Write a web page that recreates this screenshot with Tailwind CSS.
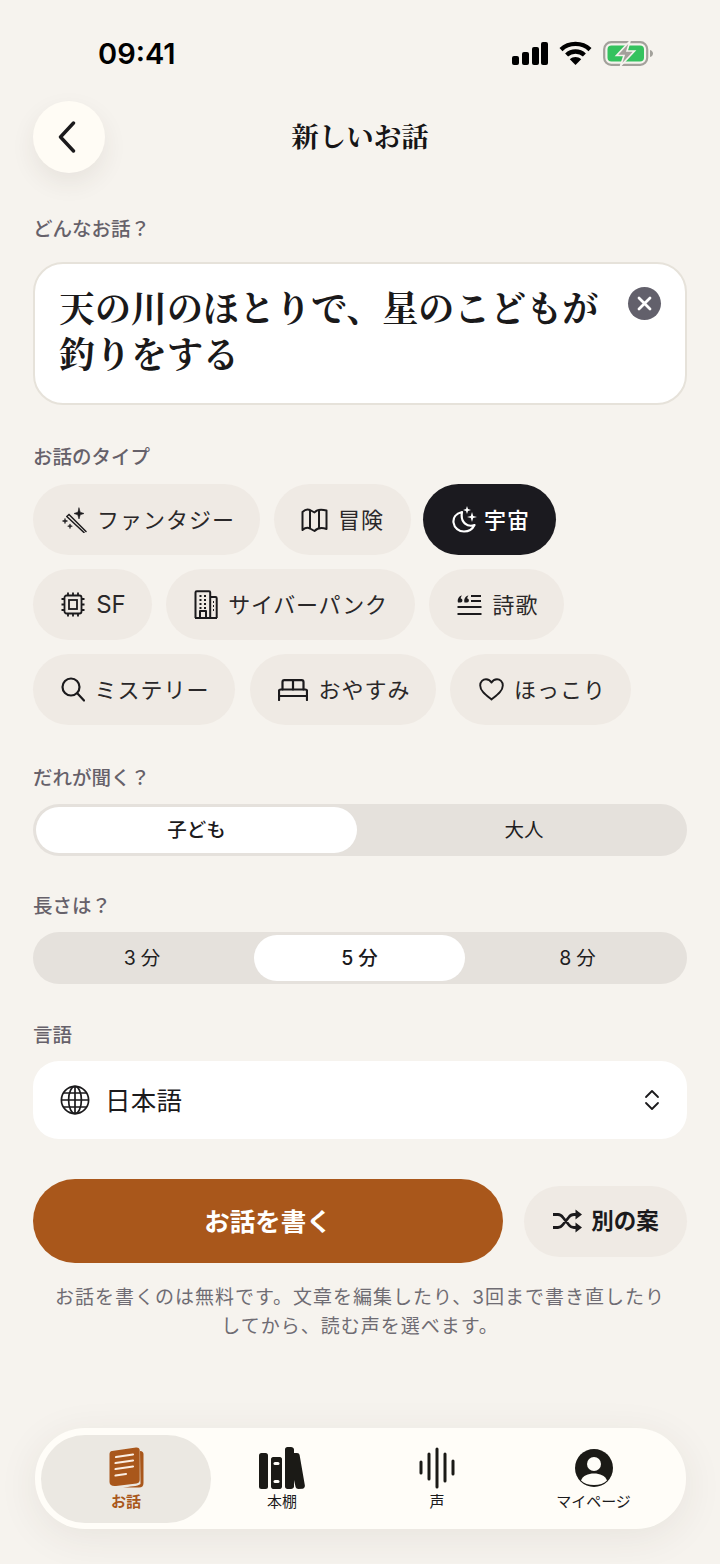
<!DOCTYPE html>
<html lang="ja">
<head>
    <meta charset="UTF-8">
    <meta name="viewport" content="width=device-width, initial-scale=1.0">
    <title>新しいお話</title>
    <script src="https://cdn.jsdelivr.net/npm/@tailwindcss/browser@4"></script>
</head>
<body class="bg-[#f6f3ee] font-['Inter','Noto_Sans_CJK_JP',sans-serif] text-[#1b1a1c]">
<div class="w-[720px] h-[1564px] overflow-hidden px-[33px] pt-[33px]">

    <!-- Status bar -->
    <div class="h-[40px] flex items-center justify-between pl-[65px] pr-[34px]">
        <span class="text-[29px] font-semibold text-black leading-none">09:41</span>
        <div class="flex items-center gap-[11px]">
            <svg width="36" height="23" viewBox="0 0 36 23" fill="#000">
                <rect x="0" y="14" width="7" height="9" rx="2"/><rect x="10" y="10" width="7" height="13" rx="2"/><rect x="20" y="5" width="7" height="18" rx="2"/><rect x="29" y="0" width="7" height="23" rx="2"/>
            </svg>
            <svg width="33" height="24" viewBox="0 0 33 24" fill="none" stroke="#000" stroke-width="4.4">
                <path d="M2 8.6 C10 1 23 1 31 8.6"/><path d="M7.6 14 C12.6 9.4 20.4 9.4 25.4 14"/><path d="M16.5 24 L10.8 18.2 C14 15.4 19 15.4 22.2 18.2 Z" fill="#000" stroke="none"/>
            </svg>
            <svg width="50" height="25" viewBox="0 0 50 25" fill="none">
                <rect x="1.2" y="1.2" width="43" height="22.6" rx="7" stroke="#a3a19b" stroke-width="2.2"/>
                <rect x="4.5" y="4.5" width="36.5" height="16" rx="4" fill="#35c25e"/>
                <path d="M47 9 C49 9.5 50 11 50 12.5 C50 14 49 15.5 47 16 Z" fill="#a3a19b"/>
                <path d="M27 0 L13.5 14.5 H21 L17.5 25 L31.5 10 H24 Z" fill="#a3a19b" stroke="#f6f3ee" stroke-width="1.6"/>
            </svg>
        </div>
    </div>

    <!-- Nav -->
    <div class="relative mt-[28px] h-[72px] flex items-center justify-center">
        <button class="absolute left-0 top-0 w-[72px] h-[72px] rounded-full bg-[#fffcf5] shadow-[0_10px_24px_rgba(60,50,40,0.08)] flex items-center justify-center pr-[5px]">
            <svg width="20" height="32" viewBox="0 0 20 32" fill="none" stroke="#1b1a1c" stroke-width="3.4" stroke-linecap="round" stroke-linejoin="round"><path d="M16.5 2 L3.5 16 L16.5 30"/></svg>
        </button>
        <h1 class="text-[27.5px] font-bold leading-none text-[#161516] pb-[2px] font-['Noto_Serif_CJK_JP','Noto_Sans_CJK_JP',serif]">新しいお話</h1>
    </div>

    <!-- Prompt -->
    <p class="mt-[42px] text-[19.5px] leading-[28px] font-medium text-[#66616a]">どんなお話？</p>
    <div class="relative mt-[19px] h-[143px] rounded-[30px] bg-white border-2 border-[#e6e2da] pl-[24px] pt-[20px]">
        <p class="text-[36px] leading-[46px] font-bold text-[#1a191a] w-[545px] font-['Noto_Serif_CJK_JP','Noto_Sans_CJK_JP',serif]">天の川のほとりで、星のこどもが釣りをする</p>
        <div class="absolute right-[24px] top-[23px] w-[33px] h-[33px] rounded-full bg-[#62606b] flex items-center justify-center">
            <svg width="15" height="15" viewBox="0 0 15 15" fill="none" stroke="#fff" stroke-width="2.8" stroke-linecap="round"><path d="M2 2 L13 13 M13 2 L2 13"/></svg>
        </div>
    </div>

    <!-- Type -->
    <p class="mt-[38px] text-[19.5px] leading-[28px] font-medium text-[#66616a]">お話のタイプ</p>
    <div class="mt-[13px] flex flex-col gap-[14px]">
        <div class="flex gap-[14px]">
            <div class="h-[71px] w-[227px] rounded-full bg-[#efeae4] flex items-center justify-center gap-[10px] pl-[4px] text-[#2a2829]">
                <svg width="25" height="26" viewBox="0 0 25 26" fill="none" stroke="#1b1a1c" stroke-width="1.5" stroke-linecap="round" stroke-linejoin="round">
                    <path d="M7 7.5 L24 24.5 M4.8 9.5 L22 25.5 M4.8 9.5 L7 7.5"/>
                    <path d="M17 1 L18.2 5.2 L22 6.5 L18.2 7.8 L17 12 L15.8 7.8 L12 6.5 L15.8 5.2 Z" fill="#1b1a1c" stroke-width="0.6"/>
                    <path d="M3 12 V16 M1 14 H5" stroke-width="1.3"/><path d="M8 17.5 V21 M6.2 19.2 H9.8" stroke-width="1.3"/>
                </svg>
                <span class="text-[22px] tracking-[1px] leading-none">ファンタジー</span>
            </div>
            <div class="h-[71px] w-[137px] rounded-full bg-[#efeae4] flex items-center justify-center gap-[10px] text-[#2a2829]">
                <svg width="27" height="26" viewBox="0 0 27 26" fill="none" stroke="#1b1a1c" stroke-width="2" stroke-linejoin="round">
                    <path d="M1.5 5 C4 2.5 7 2 9 3 L13.5 5.5 C15.5 3 20 2 25.5 3.5 V22 C21 20.5 16.5 21 13.5 24 L9 21.5 C7 20.5 4 20.8 1.5 23 Z"/><path d="M9 3 V21.5 M18 3 V21"/>
                </svg>
                <span class="text-[22px] tracking-[1px] leading-none">冒険</span>
            </div>
            <div class="-ml-[2px] h-[71px] w-[133px] rounded-full bg-[#1b1a1f] flex items-center justify-center gap-[7px] pl-[3px] text-white">
                <svg width="25" height="27" viewBox="0 0 25 27" fill="none" stroke="#fff" stroke-width="2.2" stroke-linejoin="round">
                    <path d="M10 6 C3.5 7.5 1 12 1.5 16.5 C2.2 22 7 25.5 12 25.5 C16.5 25.5 20.5 23.2 22.5 19 C16 21.5 8 17 10 6 Z"/>
                    <path d="M15 0 L16 3 L19 4 L16 5 L15 8 L14 5 L11 4 L14 3 Z" fill="#fff" stroke="none"/>
                    <path d="M20 6 L21.2 10 L25 11 L21.2 12 L20 16 L18.8 12 L15 11 L18.8 10 Z" fill="#fff" stroke="none"/>
                </svg>
                <span class="text-[22px] tracking-[1px] leading-none font-medium">宇宙</span>
            </div>
        </div>
        <div class="flex gap-[14px]">
            <div class="h-[71px] w-[119px] rounded-full bg-[#efeae4] flex items-center justify-center gap-[11px] pl-[2px] text-[#2a2829]">
                <svg width="24" height="25" viewBox="0 0 24 25" fill="none" stroke="#1b1a1c" stroke-width="1.8">
                    <rect x="3.5" y="3.5" width="17" height="18" rx="2"/><rect x="8" y="8" width="8" height="9"/>
                    <path d="M7 0.5 V3.5 M12 0.5 V3.5 M17 0.5 V3.5 M7 21.5 V24.5 M12 21.5 V24.5 M17 21.5 V24.5 M0.5 7 H3.5 M0.5 12.5 H3.5 M0.5 18 H3.5 M20.5 7 H23.5 M20.5 12.5 H23.5 M20.5 18 H23.5"/>
                </svg>
                <span class="text-[24px] leading-none text-[#2a2829]">SF</span>
            </div>
            <div class="h-[71px] w-[249px] rounded-full bg-[#efeae4] flex items-center justify-center gap-[10px] pl-[1px] text-[#2a2829]">
                <svg width="24" height="29" viewBox="0 0 24 29" fill="none" stroke="#1b1a1c" stroke-width="2" stroke-linejoin="round">
                    <path d="M1.5 28 V2.5 C1.5 1.8 2 1.2 2.8 1.2 H15 C15.7 1.2 16.2 1.8 16.2 2.5 V28"/><path d="M16.2 7 H21.5 C22.2 7 22.7 7.5 22.7 8.2 V28"/><path d="M1 28 H23"/><path d="M6 28 V21 H12 V28"/>
                    <path d="M5.5 6 H7.5 M10 6 H12 M5.5 10 H7.5 M10 10 H12 M5.5 14 H7.5 M10 14 H12 M5.5 18 H7.5 M10 18 H12 M19 12 H20 M19 16 H20 M19 20 H20" stroke-width="2.2"/>
                </svg>
                <span class="text-[22px] tracking-[0.7px] leading-none">サイバーパンク</span>
            </div>
            <div class="h-[71px] w-[135px] rounded-full bg-[#efeae4] flex items-center justify-center gap-[10px] pl-[3px] text-[#2a2829]">
                <svg width="25" height="22" viewBox="0 0 25 22" fill="none" stroke="#1b1a1c" stroke-width="2">
                    <path d="M14 2 H24 M14 7 H24 M0.5 13 H24.5 M0.5 20 H24.5"/>
                    <path d="M1 8.5 C0 5 2 2 5 1.5 C3.8 3 3.6 4 3.8 4.5 C6 4.5 6 8.5 3.5 8.5 C2.3 8.5 1.4 8.6 1 8.5 Z M7.5 8.5 C6.5 5 8.5 2 11.5 1.5 C10.3 3 10.1 4 10.3 4.5 C12.5 4.5 12.5 8.5 10 8.5 C8.8 8.5 7.9 8.6 7.5 8.5 Z" fill="#1b1a1c" stroke="none"/>
                </svg>
                <span class="text-[22px] tracking-[1px] leading-none">詩歌</span>
            </div>
        </div>
        <div class="flex gap-[14px]">
            <div class="h-[71px] w-[202px] rounded-full bg-[#efeae4] flex items-center justify-center gap-[9px] pl-[3px] text-[#2a2829]">
                <svg width="24" height="25" viewBox="0 0 24 25" fill="none" stroke="#1b1a1c" stroke-width="2.2" stroke-linecap="round"><circle cx="10" cy="10" r="8.5"/><path d="M16.5 16.5 L23 23.5"/></svg>
                <span class="text-[22px] tracking-[1px] leading-none">ミステリー</span>
            </div>
            <div class="ml-[1px] h-[71px] w-[186px] rounded-full bg-[#efeae4] flex items-center justify-center gap-[10px] pl-[3px] text-[#2a2829]">
                <svg width="30" height="22" viewBox="0 0 30 22" fill="none" stroke="#1b1a1c" stroke-width="2.2" stroke-linejoin="round" stroke-linecap="round">
                    <path d="M1 21 V12 C1 11 1.8 10.5 2.6 10.5 H27.4 C28.2 10.5 29 11 29 12 V21 M1 17 H29"/><path d="M4.5 10.5 V3 C4.5 2 5.3 1.2 6.3 1.2 H23.7 C24.7 1.2 25.5 2 25.5 3 V10.5 M15 1.5 V10.5"/>
                </svg>
                <span class="text-[22px] tracking-[1px] leading-none">おやすみ</span>
            </div>
            <div class="h-[71px] w-[181px] rounded-full bg-[#efeae4] flex items-center justify-center gap-[10px] pl-[4px] text-[#2a2829]">
                <svg width="25" height="23" viewBox="0 0 25 23" fill="none" stroke="#1b1a1c" stroke-width="1.9" stroke-linejoin="round"><path d="M12.5 21.5 C7 17 1.2 13 1.2 7.4 C1.2 3.8 4 1.2 7 1.2 C9.3 1.2 11.3 2.4 12.5 4.6 C13.7 2.4 15.7 1.2 18 1.2 C21 1.2 23.8 3.8 23.8 7.4 C23.8 13 18 17 12.5 21.5 Z"/></svg>
                <span class="text-[22px] tracking-[1px] leading-none">ほっこり</span>
            </div>
        </div>
    </div>

    <!-- Audience -->
    <p class="mt-[39px] text-[19.5px] leading-[28px] font-medium text-[#66616a]">だれが聞く？</p>
    <div class="mt-[12px] h-[52px] rounded-full bg-[#e5e1dc] p-[3px] flex text-[19.5px]">
        <div class="w-[321px] rounded-full bg-white flex items-center justify-center pt-[2px] font-medium text-[#1b1a1c]">子ども</div>
        <div class="flex-1 flex items-center justify-center pl-[7px] pt-[2px] text-[#1f1e1f]">大人</div>
    </div>

    <!-- Length -->
    <p class="mt-[36px] text-[19.5px] leading-[28px] font-medium text-[#66616a]">長さは？</p>
    <div class="mt-[12px] h-[52px] rounded-full bg-[#e5e1dc] p-[3px] flex text-[19.5px]">
        <div class="w-[218px] flex items-center justify-center pt-[2px] pr-[6px] text-[#1f1e1f]"><span class="mr-[5px]">3</span>分</div>
        <div class="w-[211px] rounded-full bg-white flex items-center justify-center pt-[2px] font-medium text-[#1b1a1c]"><span class="mr-[5px]">5</span>分</div>
        <div class="flex-1 flex items-center justify-center pt-[2px] pl-[6px] text-[#1f1e1f]"><span class="mr-[5px]">8</span>分</div>
    </div>

    <!-- Language -->
    <p class="mt-[37px] text-[19.5px] leading-[28px] font-medium text-[#66616a]">言語</p>
    <div class="mt-[12px] h-[78px] rounded-[26px] bg-white flex items-center pl-[27px] pr-[27px] gap-[15px]">
        <svg width="30" height="30" viewBox="0 0 30 30" fill="none" stroke="#1b1a1c" stroke-width="1.7">
            <circle cx="15" cy="15" r="13.6"/><ellipse cx="15" cy="15" rx="6.4" ry="13.6"/><path d="M15 1.4 V28.6 M1.4 15 H28.6 M3.4 8 H26.6 M3.4 22 H26.6"/>
        </svg>
        <span class="text-[25.5px] leading-none flex-1 pt-[2px] tracking-[0.3px] text-[#1b1a1c]">日本語</span>
        <svg width="16" height="22" viewBox="0 0 16 22" fill="none" stroke="#1b1a1c" stroke-width="1.8" stroke-linecap="round" stroke-linejoin="round"><path d="M2 8 L8 2 L14 8 M2 14 L8 20 L14 14"/></svg>
    </div>

    <!-- Actions -->
    <div class="mt-[40px] flex items-center justify-between">
        <button class="w-[470px] h-[84px] rounded-[42px] bg-[#a9571b] text-white text-[25.5px] font-bold pt-[2px]">お話を書く</button>
        <button class="w-[163px] h-[71px] rounded-full bg-[#efeae4] flex items-center justify-center gap-[9px] text-[#1b1a1c]">
            <svg width="30" height="24" viewBox="0 0 30 24" fill="none" stroke="#1b1a1c" stroke-width="2.8" stroke-linejoin="round">
                <path d="M1 5.5 H6 C8 5.5 9.5 6.5 11 8.5 L17 16 C18.5 18 20 18.5 22 18.5 H25 M1 18.5 H6 C8 18.5 9.5 17.5 11 15.5 L17 8 C18.5 6 20 5.5 22 5.5 H25"/>
                <path d="M23.5 0.5 L30 5.5 L23.5 10.5 Z M23.5 13.5 L30 18.5 L23.5 23.5 Z" fill="#1b1a1c" stroke="none"/>
            </svg>
            <span class="text-[22.5px] font-semibold leading-none">別の案</span>
        </button>
    </div>
    <p class="mt-[20px] text-[19px] tracking-[1px] leading-[29px] text-center text-[#6f6c73] -mx-[5px]">お話を書くのは無料です。文章を編集したり、3回まで書き直したり<br>してから、読む声を選べます。</p>

    <!-- Tab bar -->
    <nav class="mt-[87px] ml-[2px] w-[651px] h-[101px] rounded-[50px] bg-[#fffdf8] shadow-[0_8px_40px_rgba(60,50,40,0.08)] flex items-center px-[6px]">
        <div class="w-[170px] h-[88px] rounded-[44px] bg-[#ebe8e2] flex flex-col items-center pt-[12px] text-[#a9571b]">
            <svg width="35" height="42" viewBox="0 0 35 42">
                <path d="M31 4 C33.5 4 34.5 5.5 34.5 7 V36 C34.5 39 33 40.5 30 40.5 H14 C20 39.5 29 39.5 31.5 37 Z" fill="#a9571b"/>
                <path d="M3 4 L27 0.5 C29.5 0.3 30.7 1.5 30.7 3.5 V33 C30.7 35 29.5 36.2 27.5 36.5 L7 39 C3 39.5 0.5 38 0.5 35 V7 C0.5 5.5 1.5 4.2 3 4 Z" fill="#a9571b"/>
                <path d="M7 10 L24 7.5 M6.5 16 L24 13.5 M6.5 22 L24 19.5 M6.5 28.5 L17 27" stroke="#fbeee2" stroke-width="2.2" stroke-linecap="round"/>
            </svg>
            <span class="mt-[4px] text-[15px] font-bold leading-[18px]">お話</span>
        </div>
        <div class="w-[142px] flex flex-col items-center pt-[1px]">
            <svg width="46" height="42" viewBox="0 0 46 42" fill="#1b1a16">
                <rect x="0" y="6" width="9" height="36" rx="2.5"/>
                <path d="M12 12 C12 11 13 10 14 10 H21 C22 10 23 11 23 12 V39.5 C23 41 22 42 21 42 H14 C13 42 12 41 12 39.5 Z"/>
                <path d="M26 2.5 C26 1 27 0 28.5 0 H32 C33.5 0 35 1 35 2.5 V6 H38 C39.5 6 40.3 6.8 40.6 8 L45.8 38 C46.2 40 45 41.6 43.5 41.8 L39.5 42 C38 42 37 41.2 36.6 40 L35 33 V39.5 C35 41 33.5 42 32 42 H28.5 C27 42 26 41 26 39.5 Z"/>
                <rect x="14.5" y="15" width="6" height="3" rx="1.5" fill="#fffdf8"/><rect x="14.5" y="33" width="6" height="3" rx="1.5" fill="#fffdf8"/>
            </svg>
            <span class="mt-[4px] text-[15px] font-normal leading-[18px]">本棚</span>
        </div>
        <div class="w-[168px] flex flex-col items-center pt-[1px]">
            <svg width="36" height="42" viewBox="0 0 36 42" fill="none" stroke="#1b1a16" stroke-width="3" stroke-linecap="round">
                <path d="M2 15 V26 M10 7 V32 M18 2 V40 M26 7 V34 M34 14 V27"/>
            </svg>
            <span class="mt-[4px] text-[15px] font-normal leading-[18px]">声</span>
        </div>
        <div class="w-[145px] flex flex-col items-center pt-[3px]">
            <svg width="38" height="38" viewBox="0 0 38 38">
                <circle cx="19" cy="19" r="19" fill="#1b1a16"/>
                <circle cx="19" cy="15" r="7" fill="#fffdf8"/>
                <path d="M6 31.5 C8 26.5 13 24.5 19 24.5 C25 24.5 30 26.5 32 31.5 C29 34.5 24.5 36 19 36 C13.5 36 9 34.5 6 31.5 Z" fill="#fffdf8"/>
            </svg>
            <span class="mt-[6px] text-[15px] font-normal leading-[18px] whitespace-nowrap">マイページ</span>
        </div>
    </nav>
</div>
</body>
</html>
